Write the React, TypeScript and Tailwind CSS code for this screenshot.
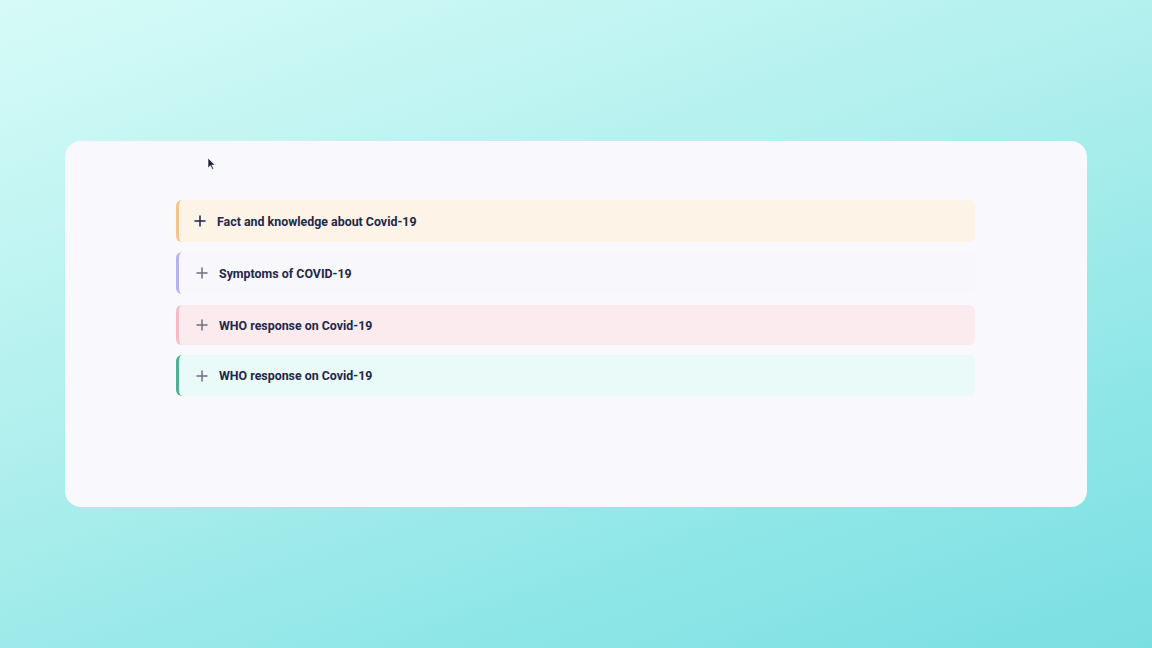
import React from "react";

const items = [
  { title: "Fact and knowledge about Covid-19", bg: "bg-[#fdf3e6]", border: "border-[#f3c48e]", plus: "text-[#1e2447]", h: "h-[42px]", pl: "pl-[15px]", gap: "gap-[11px]" },
  { title: "Symptoms of COVID-19", bg: "bg-[#f8f7fc]", border: "border-[#b5b3ee]", plus: "text-[#6f7080]", h: "h-[42px]", pl: "pl-[17px]", gap: "gap-[11px]" },
  { title: "WHO response on Covid-19", bg: "bg-[#fcebee]", border: "border-[#f3bcc4]", plus: "text-[#6f7080]", h: "h-[40px]", pl: "pl-[17px]", gap: "gap-[11px]" },
  { title: "WHO response on Covid-19", bg: "bg-[#eafaf9]", border: "border-[#4fae93]", plus: "text-[#6f7080]", h: "h-[41px]", pl: "pl-[17px]", gap: "gap-[11px]" },
];

function Plus({ className }: { className: string }) {
  return (
    <svg width="12" height="12" viewBox="0 0 12 12" className={className}>
      <path d="M6 1v10M1 6h10" stroke="currentColor" strokeWidth="1.5" strokeLinecap="round" />
    </svg>
  );
}

export default function App() {
  return (
    <div
      className="w-[1152px] h-[648px] bg-[linear-gradient(160deg,#d6fbf8_0%,#b2f0ee_40%,#8fe6e7_75%,#7adfe2_100%)] pt-[141px] pl-[65px]"
      style={{ fontFamily: "Roboto, 'Noto Sans', sans-serif" }}
    >
      <div className="relative w-[1022px] h-[366px] bg-[#f9f8fc] rounded-[16px] pt-[59px] pl-[111px]">
        <svg className="absolute left-[142px] top-[16px]" width="9" height="13" viewBox="0 0 9 13">
          <path d="M1 1v10l2.5-2.3 1.8 3.8 1.4-.7-1.8-3.7H8z" fill="#23253a" stroke="#fff" strokeWidth="0.6" />
        </svg>
        <div className="flex flex-col w-[799px]">
          {items.map((it, i) => (
            <div
              key={i}
              className={`flex items-center ${it.h} ${it.pl} ${it.gap} ${it.bg} border-l-[3px] ${it.border} rounded-[6px] ${i === 0 ? "" : i === 2 ? "mt-[11px]" : "mt-[10px]"}`}
            >
              <Plus className={it.plus} />
              <span className="text-[12.4px] font-bold text-[#222849] pt-[2px]">{it.title}</span>
            </div>
          ))}
        </div>
      </div>
    </div>
  );
}
